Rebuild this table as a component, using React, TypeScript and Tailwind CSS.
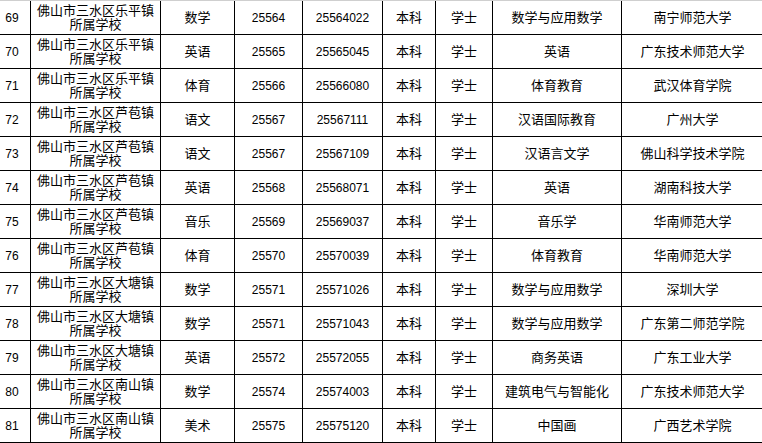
const rows: [string, string, string, string, string, string, string][] = [
  ['69', '乐平镇', '数学', '25564', '25564022', '数学与应用数学', '南宁师范大学'],
  ['70', '乐平镇', '英语', '25565', '25565045', '英语', '广东技术师范大学'],
  ['71', '乐平镇', '体育', '25566', '25566080', '体育教育', '武汉体育学院'],
  ['72', '芦苞镇', '语文', '25567', '25567111', '汉语国际教育', '广州大学'],
  ['73', '芦苞镇', '语文', '25567', '25567109', '汉语言文学', '佛山科学技术学院'],
  ['74', '芦苞镇', '英语', '25568', '25568071', '英语', '湖南科技大学'],
  ['75', '芦苞镇', '音乐', '25569', '25569037', '音乐学', '华南师范大学'],
  ['76', '芦苞镇', '体育', '25570', '25570039', '体育教育', '华南师范大学'],
  ['77', '大塘镇', '数学', '25571', '25571026', '数学与应用数学', '深圳大学'],
  ['78', '大塘镇', '数学', '25571', '25571043', '数学与应用数学', '广东第二师范学院'],
  ['79', '大塘镇', '英语', '25572', '25572055', '商务英语', '广东工业大学'],
  ['80', '南山镇', '数学', '25574', '25574003', '建筑电气与智能化', '广东技术师范大学'],
  ['81', '南山镇', '美术', '25575', '25575120', '中国画', '广西艺术学院'],
]

const cell = 'flex items-center justify-center border-r border-black shrink-0'

export default function App() {
  return (
    <div
      className="w-[762px] h-[443px] overflow-hidden bg-white text-black text-[13px]"
      style={{ fontFamily: '"Liberation Sans", "Noto Sans CJK SC", sans-serif' }}
    >
      <div className="w-[763px] border-t border-[#cfcfcf]">
        {rows.map(([no, town, subject, code, code2, major, uni]) => (
          <div key={no} className="flex h-[34px] border-b border-black">
            <div className={`${cell} w-[31px] pr-[6px] text-[12px]`}>{no}</div>
            <div className={`${cell} w-[130px] flex-col leading-[14px]`}>
              <span>佛山市三水区{town}</span>
              <span>所属学校</span>
            </div>
            <div className={`${cell} w-[74px]`}>{subject}</div>
            <div className={`${cell} w-[68px] text-[12px]`}>{code}</div>
            <div className={`${cell} w-[80px] text-[12px]`}>{code2}</div>
            <div className={`${cell} w-[53px]`}>本科</div>
            <div className={`${cell} w-[57px]`}>学士</div>
            <div className={`${cell} w-[129px]`}>{major}</div>
            <div className="flex items-center justify-center w-[141px] shrink-0">{uni}</div>
          </div>
        ))}
      </div>
    </div>
  )
}
